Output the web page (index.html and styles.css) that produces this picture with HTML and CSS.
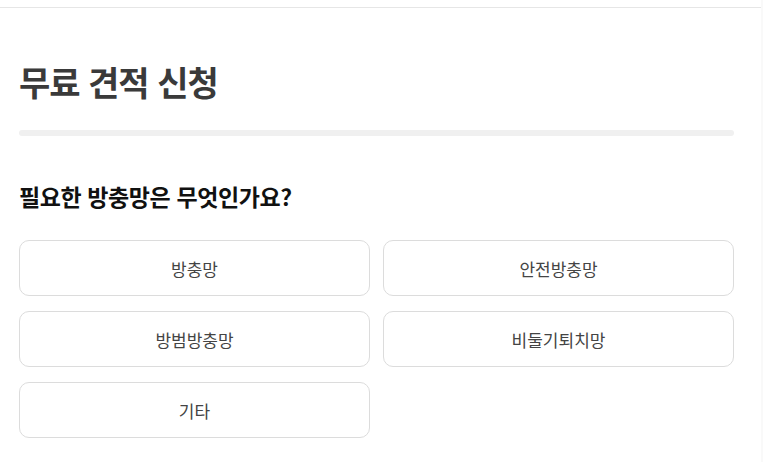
FILE: index.html
```html
<!DOCTYPE html>
<html lang="ko">
<head>
    <meta charset="UTF-8">
    <meta name="viewport" content="width=device-width, initial-scale=1.0">
    <title>무료 견적 신청</title>
    <link rel="stylesheet" href="styles.css">
</head>
<body>
    <div class="page">
        <div class="top-line"></div>
        <div class="quote-container">
            <h1 class="quote-title">무료 견적 신청</h1>
            <div class="divider"></div>

            <h2 class="question">필요한 방충망은 무엇인가요?</h2>
            <div class="options">
                <button class="option-btn">방충망</button>
                <button class="option-btn">안전방충망</button>
                <button class="option-btn">방범방충망</button>
                <button class="option-btn">비둘기퇴치망</button>
                <button class="option-btn">기타</button>
            </div>
        </div>
    </div>
</body>
</html>
```

FILE: styles.css
```css
body {
    margin: 0;
    font-family: "Noto Sans CJK KR", "Noto Sans", sans-serif;
    background-color: #f9f9f9;
}

.page {
    width: 761px;
    height: 462px;
    background: white;
    padding-top: 7px;
    box-sizing: border-box;
}

.top-line {
    height: 1px;
    background: #e6e6e6;
}

.quote-container {
    padding: 0 27px 0 19px;
}

.quote-title {
    margin: 50px 0 0;
    font-size: 34px;
    line-height: 48px;
    font-weight: 700;
    letter-spacing: -1px;
    color: #3a3a3a;
}

.divider {
    margin-top: 24px;
    height: 6px;
    border-radius: 3px;
    background: #f0f0f0;
}

.question {
    margin: 44px 0 0;
    font-size: 23px;
    line-height: 32px;
    font-weight: 700;
    letter-spacing: -0.4px;
    color: #111;
}

.options {
    margin-top: 28px;
    display: grid;
    grid-template-columns: 1fr 1fr;
    column-gap: 13px;
    row-gap: 15px;
}

.option-btn {
    height: 56px;
    background: white;
    border: 1px solid #dcdcdc;
    border-radius: 10px;
    font-family: inherit;
    font-size: 17px;
    color: #444;
    cursor: pointer;
}

.option-btn:hover {
    border-color: #aaa;
}
```
